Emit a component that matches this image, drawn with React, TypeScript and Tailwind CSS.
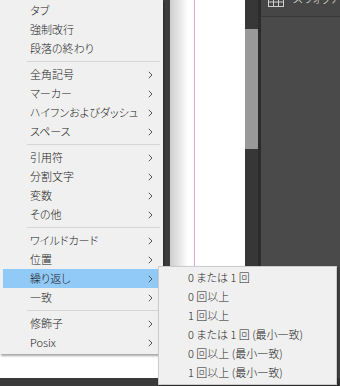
const MAIN_MENU: (string | null)[] = [
  'タブ',
  '強制改行',
  '段落の終わり',
  null,
  '全角記号',
  'マーカー',
  'ハイフンおよびダッシュ',
  'スペース',
  null,
  '引用符',
  '分割文字',
  '変数',
  'その他',
  null,
  'ワイルドカード',
  '位置',
  '繰り返し',
  '一致',
  null,
  '修飾子',
  'Posix',
];

const NO_ARROW = ['タブ', '強制改行', '段落の終わり'];

const SUB_MENU = [
  '0 または 1 回',
  '0 回以上',
  '1 回以上',
  '0 または 1 回 (最小一致)',
  '0 回以上 (最小一致)',
  '1 回以上 (最小一致)',
];

function Chevron() {
  return (
    <svg width="5" height="8" viewBox="0 0 5 8" className="shrink-0">
      <polyline points="0.8,0.8 4,4 0.8,7.2" fill="none" stroke="#555" strokeWidth="1" />
    </svg>
  );
}

function GridIcon() {
  return (
    <svg width="16" height="14" viewBox="0 0 16 14">
      <rect x="0.5" y="0.5" width="15" height="13" fill="none" stroke="#cfcfcf" />
      <line x1="0.5" y1="4.5" x2="15.5" y2="4.5" stroke="#cfcfcf" />
      <line x1="0.5" y1="9" x2="15.5" y2="9" stroke="#cfcfcf" />
      <line x1="5.5" y1="0.5" x2="5.5" y2="13.5" stroke="#cfcfcf" />
      <line x1="10.5" y1="0.5" x2="10.5" y2="13.5" stroke="#cfcfcf" />
    </svg>
  );
}

export default function App() {
  return (
    <div className="relative w-[340px] h-[386px] overflow-hidden font-['Noto_Sans_CJK_JP','Noto_Sans',sans-serif] [font-feature-settings:'palt'] text-[11px] font-light text-[#222222]">
      {/* background app */}
      <div className="flex flex-col w-full h-full">
        <div className="flex flex-1">
          <div className="w-[163px] bg-white" />
          <div className="w-[10px] bg-[#3c3c3c]" />
          <div className="w-[77px] bg-white flex">
            <div className="w-[18px] bg-gradient-to-r from-[#cdcdcd] to-white" />
            <div className="w-[6px]" />
            <div className="w-px bg-[#dfa3d6]" />
          </div>
          {/* scrollbar */}
          <div className="w-[13px] bg-[#373737] flex flex-col">
            <div className="h-[29px]" />
            <div className="h-[120px] bg-[#999999]" />
          </div>
          <div className="w-[3px] bg-[#2c2c2c]" />
          {/* panel */}
          <div className="flex-1 bg-[#4a4a4a] flex flex-col">
            <div className="h-[17px] bg-[#464646] border-b border-[#383838] flex items-start gap-[9px] pl-[7px] overflow-hidden">
              <div className="-mt-[7px]">
                <GridIcon />
              </div>
              <span className="-mt-[7px] text-[11px] leading-none text-[#e2e2e2] whitespace-nowrap">スウォッチ</span>
            </div>
          </div>
        </div>
        <div className="h-[8px] bg-[#3a3a3a]" />
      </div>

      {/* main context menu */}
      <div className="absolute left-0 top-0 w-[163px] bg-[#f0f0f0] px-[3px] pt-[1px] pb-[2px] shadow-[1px_2px_2px_rgba(0,0,0,0.35)]">
        {MAIN_MENU.map((item, i) =>
          item === null ? (
            <div key={i} className="h-[7px] flex items-center pl-[24px]">
              <div className="w-full h-px bg-[#d5d5d5]" />
            </div>
          ) : (
            <div
              key={i}
              className={`h-[19px] flex items-center justify-between pl-[27px] pr-[7px] leading-none ${
                item === '繰り返し' ? 'bg-[#91c9f7]' : ''
              }`}
            >
              <span className="whitespace-nowrap">{item}</span>
              {!NO_ARROW.includes(item) && <Chevron />}
            </div>
          ),
        )}
      </div>

      {/* sub menu */}
      <div className="absolute left-[158px] top-[266px] w-[179px] bg-[#f0f0f0] border border-[#cccccc] pt-[1px] pb-[2px] px-[2px] shadow-[2px_2px_3px_rgba(0,0,0,0.3)]">
        {SUB_MENU.map((item) => (
          <div key={item} className="h-[19px] flex items-center pl-[27px] leading-none whitespace-nowrap">
            {item}
          </div>
        ))}
      </div>
    </div>
  );
}
